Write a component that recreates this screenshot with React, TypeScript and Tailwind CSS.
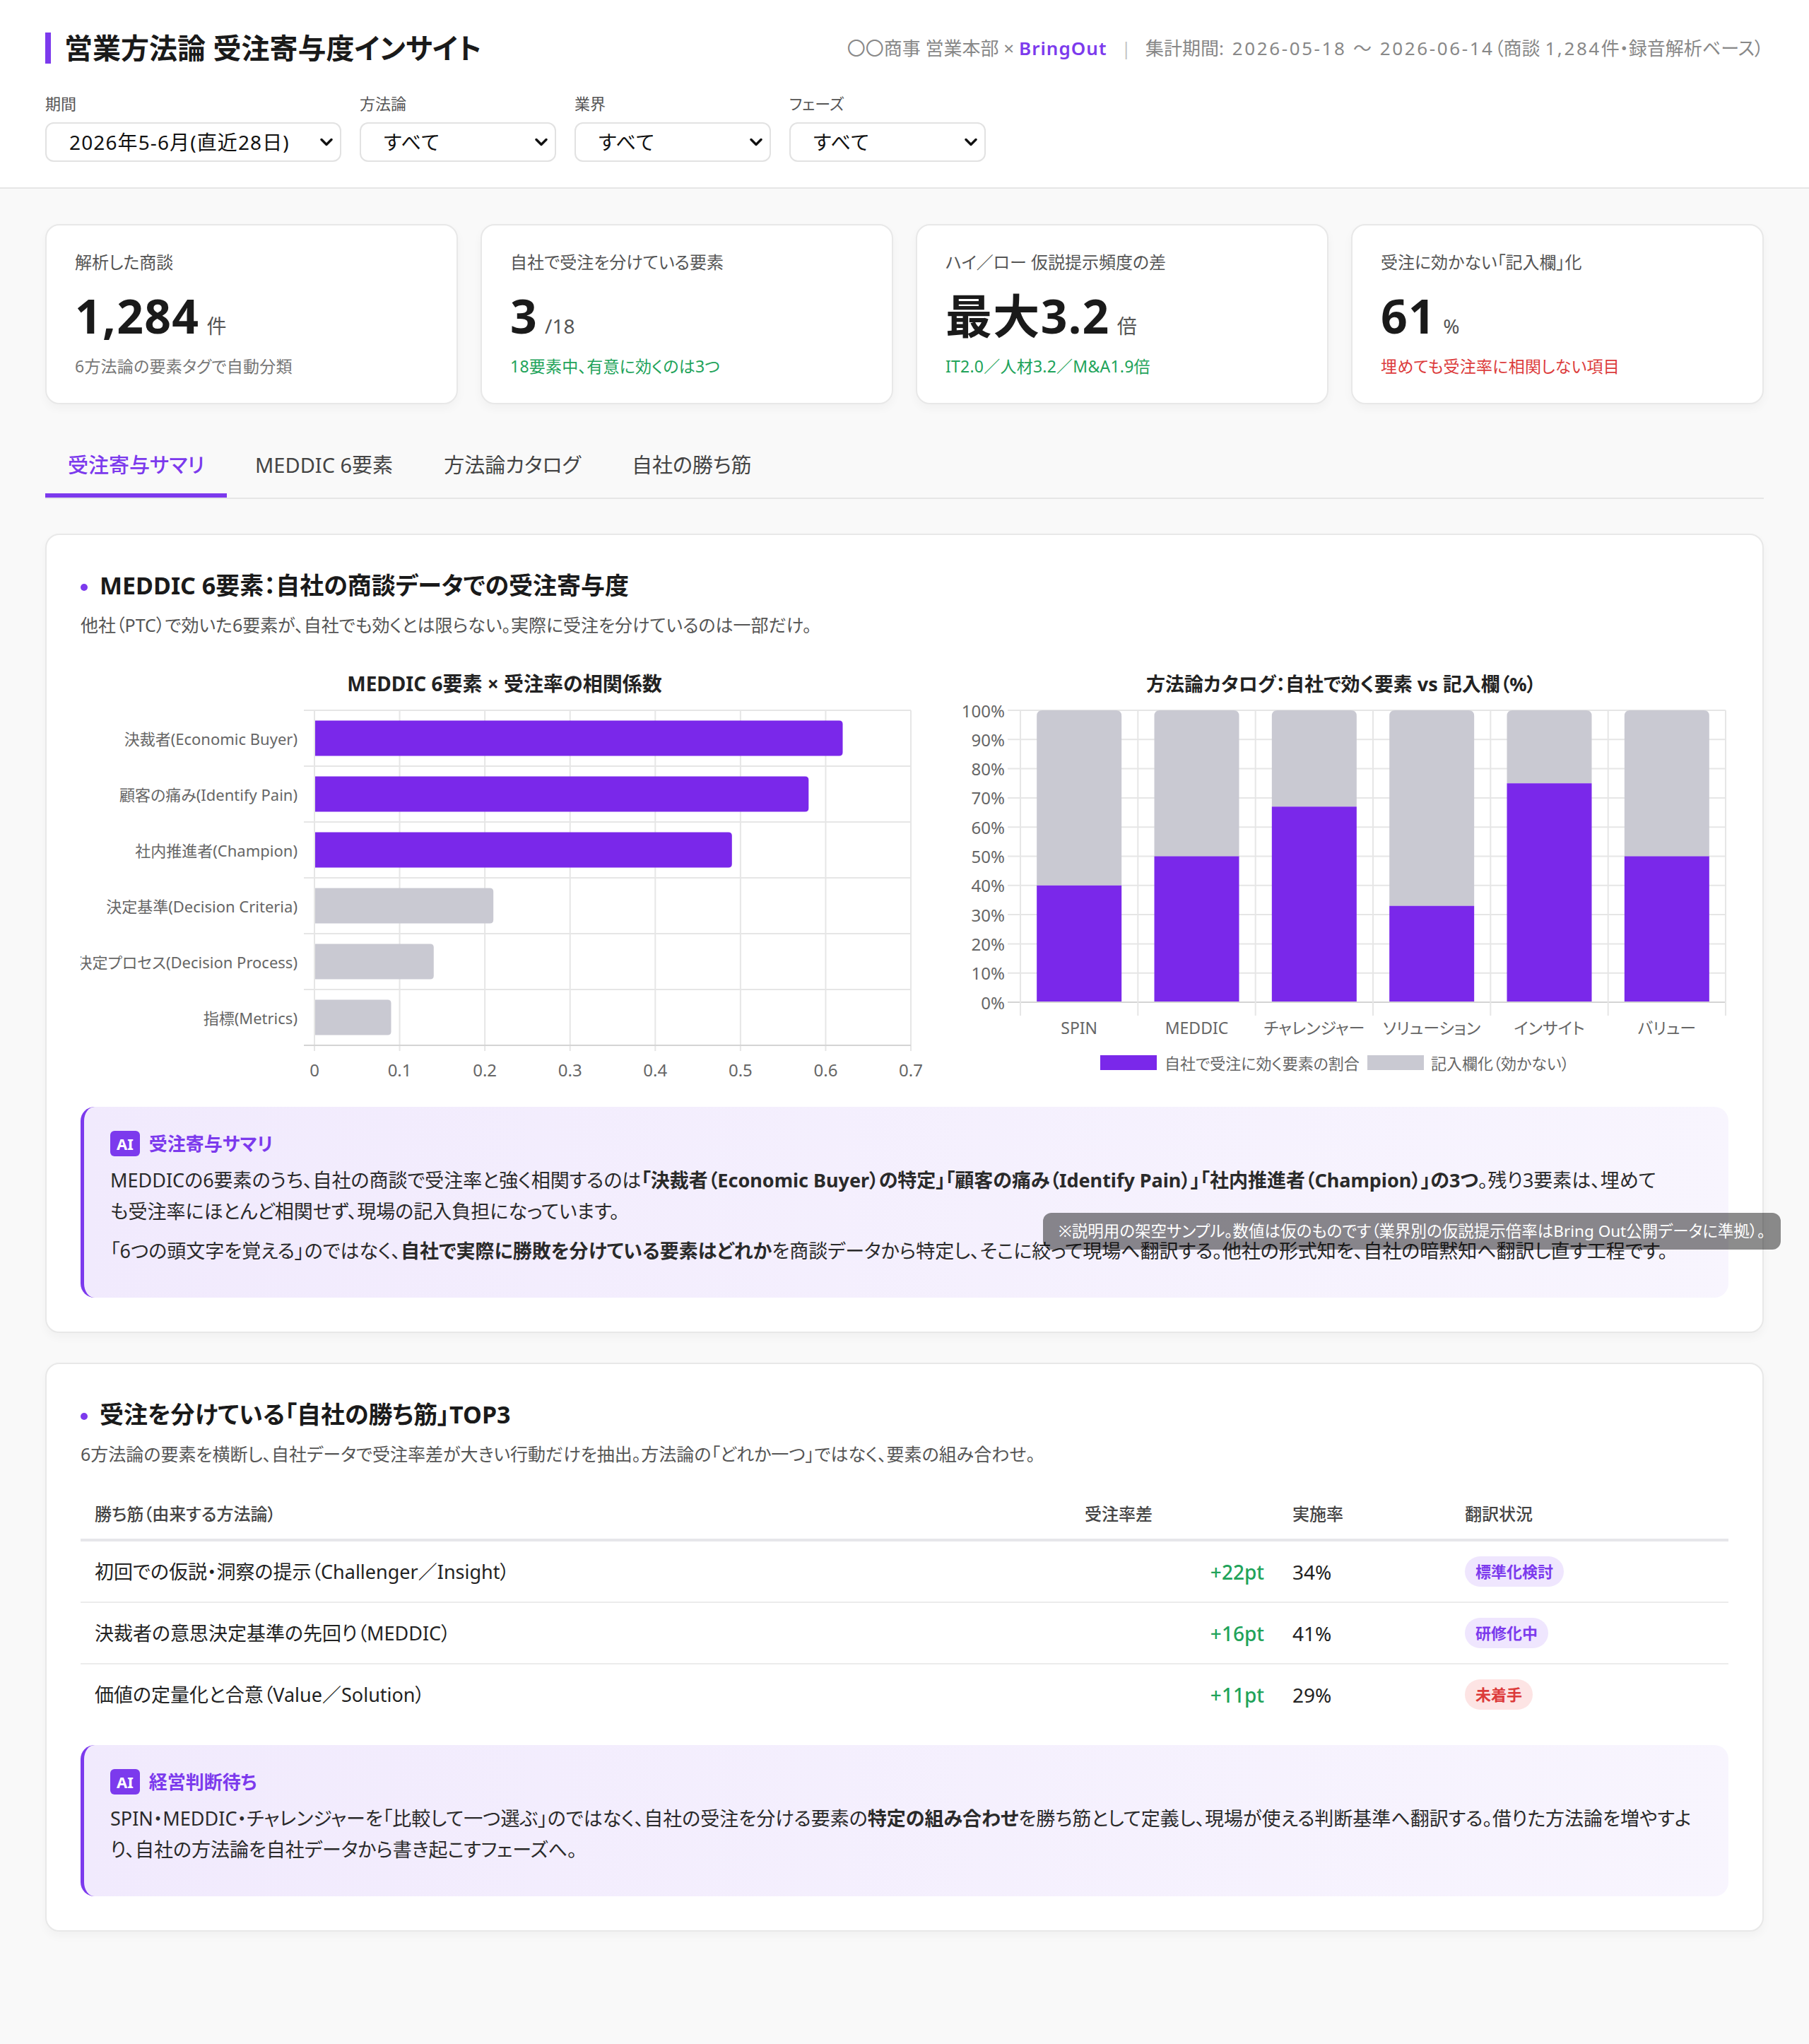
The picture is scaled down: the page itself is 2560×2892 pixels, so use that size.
import React from "react";

type Kpi = {
  label: string;
  value: string;
  unit: string;
  note: string;
  tone: "gray" | "green" | "red";
};

const kpis: Kpi[] = [
  { label: "解析した商談", value: "1,284", unit: "件", note: "6方法論の要素タグで自動分類", tone: "gray" },
  { label: "自社で受注を分けている要素", value: "3", unit: "/18", note: "18要素中、有意に効くのは3つ", tone: "green" },
  { label: "ハイ／ロー 仮説提示頻度の差", value: "最大3.2", unit: "倍", note: "IT2.0／人材3.2／M&A1.9倍", tone: "green" },
  { label: "受注に効かない「記入欄」化", value: "61", unit: "%", note: "埋めても受注率に相関しない項目", tone: "red" },
];

const meddic = [
  { label: "決裁者(Economic Buyer)", v: 0.62, hit: true },
  { label: "顧客の痛み(Identify Pain)", v: 0.58, hit: true },
  { label: "社内推進者(Champion)", v: 0.49, hit: true },
  { label: "決定基準(Decision Criteria)", v: 0.21, hit: false },
  { label: "決定プロセス(Decision Process)", v: 0.14, hit: false },
  { label: "指標(Metrics)", v: 0.09, hit: false },
];

const catalog: [string, number][] = [
  ["SPIN", 40],
  ["MEDDIC", 50],
  ["チャレンジャー", 67],
  ["ソリューション", 33],
  ["インサイト", 75],
  ["バリュー", 50],
];

const winRows = [
  { name: "初回での仮説・洞察の提示（Challenger／Insight）", diff: "+22pt", rate: "34%", status: "標準化検討", tone: "purple" },
  { name: "決裁者の意思決定基準の先回り（MEDDIC）", diff: "+16pt", rate: "41%", status: "研修化中", tone: "purple" },
  { name: "価値の定量化と合意（Value／Solution）", diff: "+11pt", rate: "29%", status: "未着手", tone: "red" },
];

const PURPLE = "#7a28ea";
const GRAY_BAR = "#c9c9d2";
const GRID = "#e6e6e6";

function Chevron() {
  return (
    <svg width="18" height="12" viewBox="0 0 18 12" className="pointer-events-none absolute right-[10px] top-1/2 -translate-y-1/2">
      <path d="M2 2.5 L9 9.5 L16 2.5" fill="none" stroke="#111" strokeWidth="3.4" strokeLinecap="round" strokeLinejoin="round" />
    </svg>
  );
}

function Filter({ label, value, width }: { label: string; value: string; width: string }) {
  return (
    <div className="flex flex-col">
      <span className="mb-[11px] text-[22px] leading-[32px] text-[#555]">{label}</span>
      <div className={"relative h-[56px] rounded-[12px] border-2 border-[#e2e2e2] bg-white " + width}>
        <select
          defaultValue={value}
          className="h-full w-full appearance-none bg-transparent pl-[32px] pr-[40px] text-[28px] tracking-[0.04em] text-[#111] outline-none"
        >
          <option>{value}</option>
        </select>
        <Chevron />
      </div>
    </div>
  );
}

function Header() {
  return (
    <header className="border-b-2 border-[#e6e6e6] bg-white px-16 pt-[46px] pb-[36px]">
      <div className="flex items-center justify-between">
        <h1 className="border-l-8 border-[#7c3aed] pl-[19px] text-[40px] font-bold leading-[44px] text-[#1a1a1a]">
          営業方法論 受注寄与度インサイト
        </h1>
        <div className="whitespace-nowrap text-[26px] text-[#888]">
          〇〇商事 営業本部 × <span className="font-semibold tracking-[0.04em] text-[#7c3aed]">BringOut</span>
          <span className="mx-[20px] text-[#c4c4c4]">|</span>
          集計期間<span className="tracking-[0.1em]">: 2026-05-18 〜 2026-06-14</span>（商談{" "}
          <span className="tracking-[0.1em]">1,284</span>件・録音解析ベース）
        </div>
      </div>
      <div className="mt-[40px] flex gap-[26px]">
        <Filter label="期間" value="2026年5-6月(直近28日)" width="w-[419px]" />
        <Filter label="方法論" value="すべて" width="w-[278px]" />
        <Filter label="業界" value="すべて" width="w-[278px]" />
        <Filter label="フェーズ" value="すべて" width="w-[278px]" />
      </div>
    </header>
  );
}

function KpiCard({ kpi }: { kpi: Kpi }) {
  const noteColor = kpi.tone === "green" ? "text-[#21a35a]" : kpi.tone === "red" ? "text-[#dc3b3b]" : "text-[#777]";
  return (
    <div className="rounded-[20px] border-2 border-[#e8e8e8] bg-white px-[40px] py-[35px] shadow-[0_6px_14px_rgba(0,0,0,0.035)]">
      <div className="text-[24px] leading-[34px] text-[#555]">{kpi.label}</div>
      <div className="mt-[20px] flex h-[76px] items-baseline gap-[10px]">
        <span className="text-[66px] font-bold leading-[76px] tracking-[0.02em] text-[#1a1a1a]">{kpi.value}</span>
        <span className="text-[28px] text-[#555]">{kpi.unit}</span>
      </div>
      <div className={"mt-[17px] text-[23px] leading-[34px] tracking-[0.01em] " + noteColor}>{kpi.note}</div>
    </div>
  );
}

function Tabs() {
  const tabs = ["受注寄与サマリ", "MEDDIC 6要素", "方法論カタログ", "自社の勝ち筋"];
  return (
    <div className="mt-[46px] flex gap-[8px] border-b-2 border-[#e6e6e6]">
      {tabs.map((t, i) => (
        <div
          key={t}
          className={
            "border-b-[6px] px-[32px] pt-[20px] pb-[20px] text-[29px] leading-[40px] " +
            (i === 0 ? "border-[#7c3aed] font-medium text-[#7c3aed]" : "border-transparent text-[#444]")
          }
        >
          {t}
        </div>
      ))}
    </div>
  );
}

function SectionTitle({ children }: { children: React.ReactNode }) {
  return (
    <h2 className="flex items-center text-[34px] font-bold leading-[48px] text-[#1a1a1a]">
      <span className="mr-[17px] mt-[6px] h-[10px] w-[10px] rounded-full bg-[#7c3aed]" />
      {children}
    </h2>
  );
}

function MeddicChart() {
  const x0 = 331;
  const x1 = 1175;
  const k = (x1 - x0) / 0.7;
  const top = 69;
  const band = 79;
  const bottom = top + band * 6;
  const ticks = [0, 0.1, 0.2, 0.3, 0.4, 0.5, 0.6, 0.7];
  return (
    <svg width={1208} height={600} className="shrink-0">
      <text x={600} y={42} textAnchor="middle" fontSize={28} fontWeight={700} fill="#222">
        MEDDIC 6要素 × 受注率の相関係数
      </text>
      {ticks.map((t) => (
        <line key={t} x1={x0 + t * k} x2={x0 + t * k} y1={top} y2={bottom + 8} stroke={GRID} strokeWidth={2} />
      ))}
      {[0, 1, 2, 3, 4, 5, 6].map((i) => (
        <line
          key={i}
          x1={x0 - 15}
          x2={x1}
          y1={top + band * i}
          y2={top + band * i}
          stroke={i === 6 ? "#d4d4d4" : GRID}
          strokeWidth={2}
        />
      ))}
      {meddic.map((m, i) => {
        const y = top + band * i + 14.5;
        const h = 50;
        const x = x0 + m.v * k;
        const r = 5;
        return (
          <path
            key={m.label}
            d={`M${x0 + 1} ${y} H${x - r} Q${x} ${y} ${x} ${y + r} V${y + h - r} Q${x} ${y + h} ${x - r} ${y + h} H${x0 + 1} Z`}
            fill={m.hit ? PURPLE : GRAY_BAR}
          />
        );
      })}
      {meddic.map((m, i) => (
        <text
          key={m.label}
          x={307}
          y={top + band * i + band / 2}
          textAnchor="end"
          dominantBaseline="central"
          fontSize={22}
          fill="#666"
        >
          {m.label}
        </text>
      ))}
      {ticks.map((t) => (
        <text key={t} x={x0 + t * k} y={587} textAnchor="middle" fontSize={24} fill="#666">
          {t}
        </text>
      ))}
    </svg>
  );
}

function CatalogChart() {
  const px0 = 122;
  const px1 = 1120;
  const top = 69;
  const bottom = 482;
  const band = (px1 - px0) / 6;
  const yOf = (p: number) => bottom - ((bottom - top) * p) / 100;
  return (
    <svg width={1124} height={600} className="shrink-0">
      <text x={576} y={42} textAnchor="middle" fontSize={27} fontWeight={700} fill="#222">
        方法論カタログ：自社で効く要素 vs 記入欄（%）
      </text>
      {[0, 10, 20, 30, 40, 50, 60, 70, 80, 90, 100].map((p) => (
        <g key={p}>
          <line x1={104} x2={px1} y1={yOf(p)} y2={yOf(p)} stroke={p === 0 ? "#d4d4d4" : GRID} strokeWidth={2} />
          <text x={100} y={yOf(p)} textAnchor="end" dominantBaseline="central" fontSize={24} fill="#666">
            {p}%
          </text>
        </g>
      ))}
      {[0, 1, 2, 3, 4, 5, 6].map((j) => (
        <line key={j} x1={px0 + band * j} x2={px0 + band * j} y1={top} y2={501} stroke={GRID} strokeWidth={2} />
      ))}
      {catalog.map(([name, v], j) => {
        const cx = px0 + band * (j + 0.5);
        const w = 120;
        const l = cx - w / 2;
        const r = l + w;
        const yv = yOf(v);
        const rr = 8;
        return (
          <g key={name}>
            <path
              d={`M${l} ${yv} V${top + rr} Q${l} ${top} ${l + rr} ${top} H${r - rr} Q${r} ${top} ${r} ${top + rr} V${yv} Z`}
              fill={GRAY_BAR}
            />
            <rect x={l} y={yv} width={w} height={bottom - yv - 1} fill={PURPLE} />
            <text x={cx} y={527} textAnchor="middle" fontSize={23} fill="#666">
              {name}
            </text>
          </g>
        );
      })}
      <rect x={235} y={557} width={80} height={21} fill={PURPLE} />
      <text x={326} y={568} dominantBaseline="central" fontSize={22} fill="#666">
        自社で受注に効く要素の割合
      </text>
      <rect x={613} y={557} width={80} height={21} fill={GRAY_BAR} />
      <text x={703} y={568} dominantBaseline="central" fontSize={22} fill="#666">
        記入欄化（効かない）
      </text>
    </svg>
  );
}

function AiNote({ title, children, className = "" }: { title: string; children: React.ReactNode; className?: string }) {
  return (
    <div
      className={
        "rounded-[20px] border-l-[5px] border-[#7c3aed] bg-gradient-to-r from-[#f1eafd] to-[#f8f5fe] pl-[37px] pr-[24px] pt-[34px] pb-[44px] " +
        className
      }
    >
      <div className="mb-[12px] flex items-center gap-[13px]">
        <span className="flex h-[36px] items-center rounded-[6px] bg-[#7c3aed] px-[9px] text-[22px] font-bold leading-none text-white">
          AI
        </span>
        <span className="text-[26px] font-bold leading-[36px] text-[#7c3aed]">{title}</span>
      </div>
      <div className="space-y-[12px] text-[27px] leading-[44px] text-[#2a2a2a]">{children}</div>
    </div>
  );
}

function Card({ children, className = "" }: { children: React.ReactNode; className?: string }) {
  return (
    <section
      className={
        "rounded-[20px] border-2 border-[#e8e8e8] bg-white px-[48px] pt-[47px] pb-[48px] shadow-[0_6px_14px_rgba(0,0,0,0.035)] " +
        className
      }
    >
      {children}
    </section>
  );
}

export default function App() {
  return (
    <div className="relative min-h-[2892px] bg-[#f9f9f9] font-['Noto_Sans','Noto_Sans_CJK_JP',sans-serif] text-[#1f1f1f] [font-feature-settings:'palt']">
      <Header />

      <main className="px-16 pt-[50px] pb-[120px]">
        <div className="grid grid-cols-4 gap-8">
          {kpis.map((k) => (
            <KpiCard key={k.label} kpi={k} />
          ))}
        </div>

        <Tabs />

        <Card className="mt-[49px]">
          <SectionTitle>MEDDIC 6要素：自社の商談データでの受注寄与度</SectionTitle>
          <p className="mt-[12px] text-[25px] leading-[40px] text-[#555]">
            他社（PTC）で効いた6要素が、自社でも効くとは限らない。実際に受注を分けているのは一部だけ。
          </p>
          <div className="mt-[32px] flex">
            <MeddicChart />
            <CatalogChart />
          </div>
          <AiNote title="受注寄与サマリ" className="mt-[30px]">
            <p>
              MEDDICの6要素のうち、自社の商談で受注率と強く相関するのは
              <b>「決裁者（Economic Buyer）の特定」「顧客の痛み（Identify Pain）」「社内推進者（Champion）」の3つ</b>
              。残り3要素は、埋めて
              <br />
              も受注率にほとんど相関せず、現場の記入負担になっています。
            </p>
            <p>
              「6つの頭文字を覚える」のではなく、<b>自社で実際に勝敗を分けている要素はどれか</b>
              を商談データから特定し、そこに絞って現場へ翻訳する。他社の形式知を、自社の暗黙知へ翻訳し直す工程です。
            </p>
          </AiNote>
        </Card>

        <Card className="mt-[42px]">
          <SectionTitle>受注を分けている「自社の勝ち筋」TOP3</SectionTitle>
          <p className="mt-[12px] text-[25px] leading-[40px] text-[#555]">
            6方法論の要素を横断し、自社データで受注率差が大きい行動だけを抽出。方法論の「どれか一つ」ではなく、要素の組み合わせ。
          </p>
          <table className="mt-[28px] w-full table-fixed border-collapse">
            <colgroup>
              <col className="w-[1401px]" />
              <col className="w-[294px]" />
              <col className="w-[244px]" />
              <col />
            </colgroup>
            <thead>
              <tr className="border-b-4 border-[#e6e6ea]">
                {["勝ち筋（由来する方法論）", "受注率差", "実施率", "翻訳状況"].map((h) => (
                  <th key={h} className="pl-[20px] pt-[20px] pb-[18px] text-left text-[24px] font-medium leading-[34px] text-[#444]">
                    {h}
                  </th>
                ))}
              </tr>
            </thead>
            <tbody>
              {winRows.map((r) => (
                <tr key={r.name} className="border-b-2 border-[#ececec] last:border-b-0">
                  <td className="px-[20px] py-[21px] text-[27px] leading-[40px] text-[#222]">{r.name}</td>
                  <td className="px-[20px] py-[21px] text-right text-[28px] font-medium leading-[40px] text-[#21a35a]">{r.diff}</td>
                  <td className="px-[20px] py-[21px] text-[28px] leading-[40px] text-[#222]">{r.rate}</td>
                  <td className="px-[20px] py-[21px]">
                    <span
                      className={
                        "inline-flex h-[43px] items-center rounded-full px-[15px] text-[22px] font-bold " +
                        (r.tone === "red" ? "bg-[#fde4e4] text-[#dc3b3b]" : "bg-[#efe6fe] text-[#7c3aed]")
                      }
                    >
                      {r.status}
                    </span>
                  </td>
                </tr>
              ))}
            </tbody>
          </table>
          <AiNote title="経営判断待ち" className="mt-[29px]">
            <p>
              SPIN・MEDDIC・チャレンジャーを「比較して一つ選ぶ」のではなく、自社の受注を分ける要素の
              <b>特定の組み合わせ</b>
              を勝ち筋として定義し、現場が使える判断基準へ翻訳する。借りた方法論を増やすよ
              <br />
              り、自社の方法論を自社データから書き起こすフェーズへ。
            </p>
          </AiNote>
        </Card>
      </main>

      <div className="absolute left-[1476px] top-[1716px] h-[52px] whitespace-nowrap rounded-[12px] bg-[rgba(0,0,0,0.45)] px-[22px] text-[22.5px] leading-[52px] text-white">
        ※説明用の架空サンプル。数値は仮のものです（業界別の仮説提示倍率はBring Out公開データに準拠）。
      </div>
    </div>
  );
}
